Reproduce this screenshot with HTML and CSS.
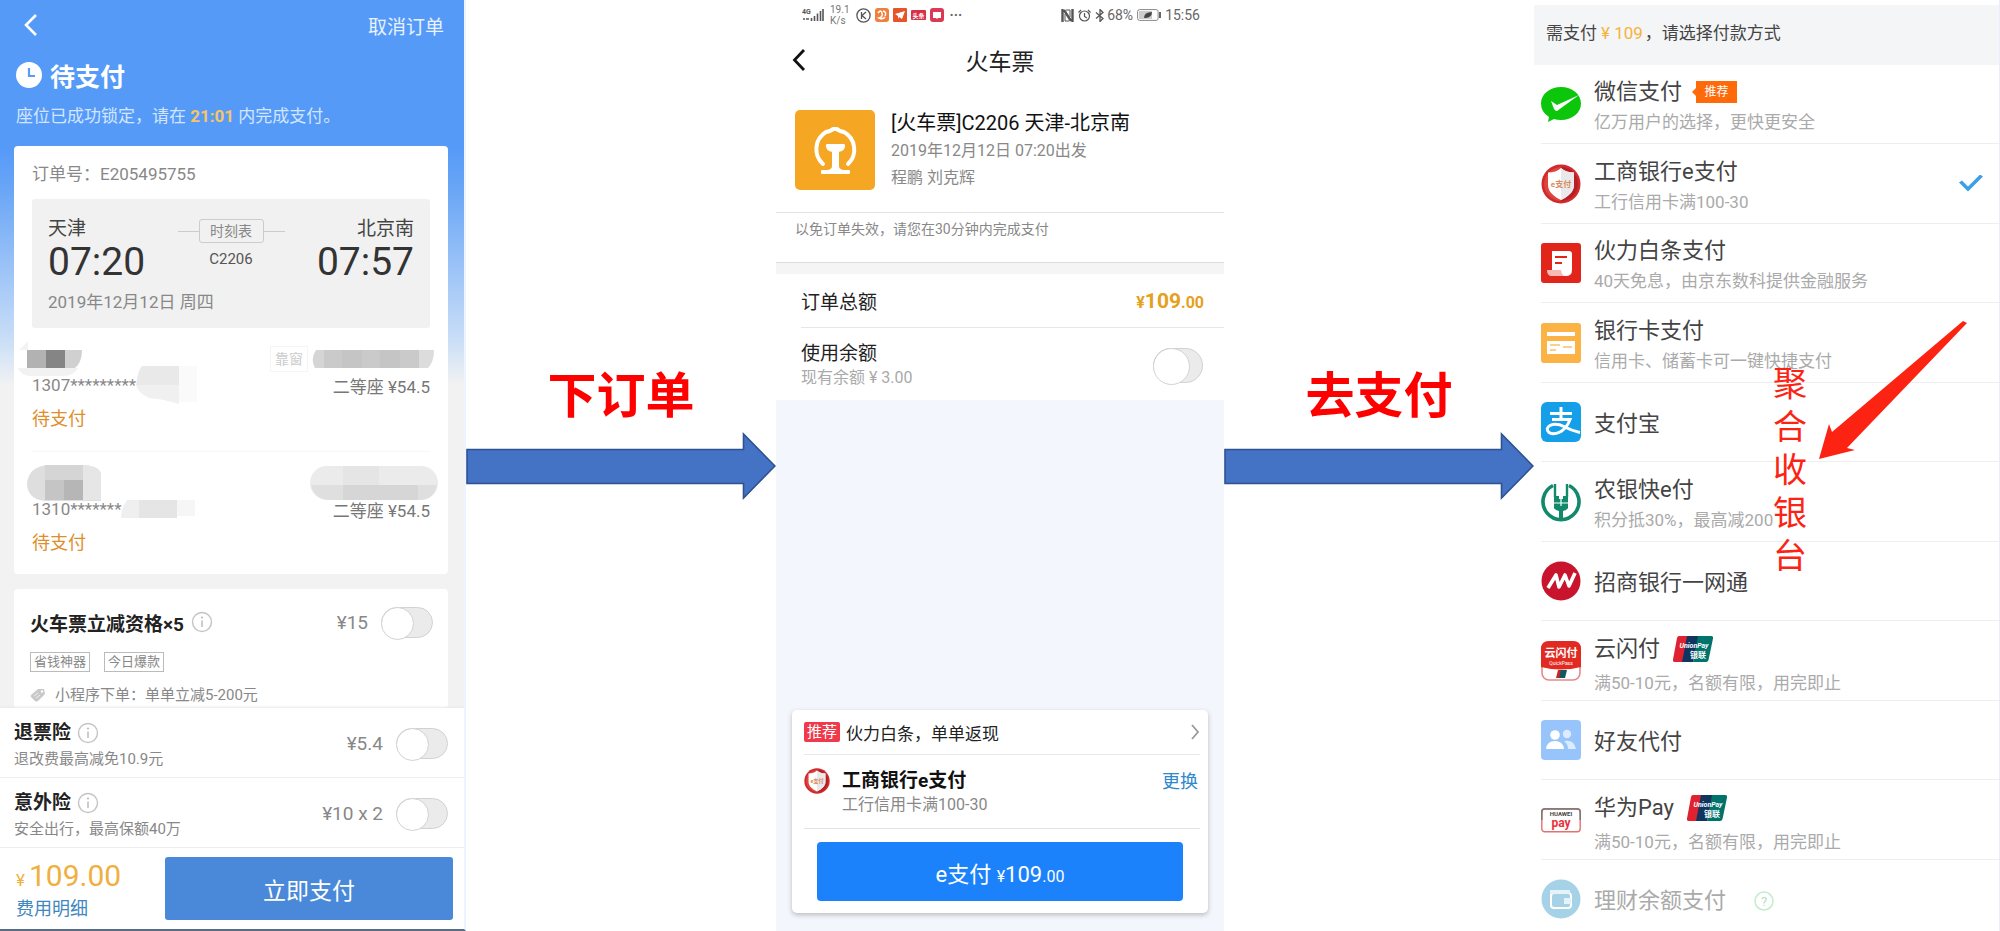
FILE: index.html
```html
<!DOCTYPE html>
<html lang="zh-CN">
<head>
<meta charset="utf-8">
<title>火车票支付流程</title>
<link rel="stylesheet" href="styles.css">
</head>
<body>
<svg class="defs" width="0" height="0" aria-hidden="true">
  <symbol id="info" viewBox="0 0 22 22">
    <circle cx="11" cy="11" r="9.5" fill="none" stroke="#c4c4c4" stroke-width="1.4"/>
    <circle cx="11" cy="6.5" r="1.1" fill="#bbb"/>
    <path d="M11 9.5v6.5" stroke="#bbb" stroke-width="1.5"/>
  </symbol>
  <symbol id="icbc" viewBox="0 0 40 40">
    <circle cx="20" cy="20" r="19.5" fill="#d02a2c"/>
    <circle cx="20" cy="20" r="17" fill="#b81f24"/>
    <path d="M3 20a17 17 0 0 1 17-17v34A17 17 0 0 1 3 20z" fill="#e0423c"/>
    <path d="M20 4c3 3 8 4.500 13 4.500V21c0 7-6 11.500-13 15C13 32.500 7 28 7 21V8.500C12 8.500 17 7 20 4z" fill="#fff"/>
    <path d="M20 4c3 3 8 4.500 13 4.500V21c0 7-6 11.500-13 15z" fill="#e9e9ec"/>
  </symbol>
  <symbol id="unionpay" viewBox="0 0 40 26">
    <path d="M6 0h10l-6 26H2q-2.500 0-2-2.500L4 2q.5-2 2-2z" fill="#e02230"/>
    <path d="M14 0h12l-6 26H9z" fill="#12355f"/>
    <path d="M25 0h13q2.500 0 2 2.500L35.500 24q-.5 2-2.500 2H20z" fill="#00736c"/>
  </symbol>
</svg>

<main class="flow">

  <section class="phone order">
    <header class="order-head">
      <div class="order-nav">
        <button class="icon-btn" aria-label="返回"><svg width="14" height="22" viewBox="0 0 14 22"><path d="M12 1L2 11l10 10" fill="none" stroke="#fff" stroke-width="2.600"/></svg></button>
        <button class="text-btn cancel">取消订单</button>
      </div>
      <h1 class="order-state">
        <svg width="26" height="26" viewBox="0 0 26 26"><circle cx="13" cy="13" r="13" fill="#fff"/><path d="M13 6v8h6" fill="none" stroke="#5a9bf5" stroke-width="2.200"/></svg>
        待支付
      </h1>
      <p class="order-tip">座位已成功锁定，请在 <b>21:01</b> 内完成支付。</p>
    </header>

    <article class="card ticket">
      <p class="order-no">订单号：E205495755</p>
      <div class="trip">
        <div class="stop"><span class="station">天津</span><span class="time">07:20</span></div>
        <div class="train">
          <div class="train-line"><button class="timetable">时刻表</button></div>
          <span>C2206</span>
        </div>
        <div class="stop end"><span class="station">北京南</span><span class="time">07:57</span></div>
        <p class="date">2019年12月12日 周四</p>
      </div>

      <div class="passenger">
        <div class="p-name">
          <svg class="mask-left" width="64" height="36" viewBox="0 0 64 36"><path d="M0 10L10 0v9H0z" fill="#f3f3f3"/><path d="M0 27h60q-5 8-14 8H12q-8 0-12-8z" fill="#f2f2f2"/><path d="M9 9h20v18H9z" fill="#b2b2b2"/><path d="M28 9h19v18H28z" fill="#858585"/><path d="M47 9h17q0 12-7 18H47z" fill="#d0d0d0"/></svg>
          <span class="seat-tag">靠窗</span>
          <svg class="mask-right" width="122" height="18" viewBox="0 0 122 18"><path d="M4 0h9v18H3q-5-9 1-18z" fill="#d5d5d5"/><path d="M12 0h95v18H12z" fill="#cacaca"/><path d="M30 0h20v18H30zM68 0h20v18H68z" fill="#c5c5c5"/><path d="M107 0h15q0 12-6 18h-9z" fill="#dcdcdc"/></svg>
        </div>
        <div class="p-id">
          <span>1307*********</span>
          <svg width="62" height="38" viewBox="0 0 62 38"><path d="M6 0h37v19H0Q2 4 6 0z" fill="#e9e9e9"/><path d="M0 19h43v19q-16-5-30-6Q2 27 0 19z" fill="#f0f0f0"/><path d="M43 0h18v36H43z" fill="#fafafa"/></svg>
          <span class="price">二等座 ¥54.5</span>
        </div>
        <p class="p-state">待支付</p>
      </div>
      <div class="passenger">
        <div class="p-name">
          <svg class="mask-low" width="74" height="36" viewBox="0 0 74 36"><path d="M20 0h38q16 2 16 10v26H18Q0 34 0 18 2 2 20 0z" fill="#dedede"/><path d="M18 0h38v15H18z" fill="#d5d5d5"/><path d="M18 15h19v20H18z" fill="#c5c5c5"/><path d="M37 15h19v20H37z" fill="#b6b6b6"/><path d="M56 0v35h18V10Q72 2 60 0z" fill="#e6e6e6"/></svg>
          <svg class="mask-wide" width="128" height="34" viewBox="0 0 128 34"><rect width="128" height="34" rx="17" fill="#ebebeb"/><path d="M1 19h126q-3 15-18 15H18Q4 32 1 19z" fill="#dfdfdf"/><path d="M33 0h36v19H33z" fill="#e5e5e5"/><path d="M33 19h75v15H33z" fill="#d6d6d6"/></svg>
        </div>
        <div class="p-id">
          <span>1310*******</span>
          <svg width="75" height="18" viewBox="0 0 75 18"><path d="M6 0h12v18H0Q0 8 6 0z" fill="#efefef"/><path d="M18 0h38v18H18z" fill="#e5e5e5"/><path d="M56 0h18v16H56z" fill="#f6f6f6"/></svg>
          <span class="price">二等座 ¥54.5</span>
        </div>
        <p class="p-state">待支付</p>
      </div>
    </article>

    <article class="card coupon">
      <div class="coupon-head">
        <h2>火车票立减资格×5</h2>
        <svg width="22" height="22"><use href="#info"/></svg>
        <span class="amount">¥15</span>
        <input class="switch" type="checkbox" aria-label="火车票立减资格">
      </div>
      <div class="tags"><span>省钱神器</span><span>今日爆款</span></div>
      <p class="promo">
        <svg width="16" height="14" viewBox="0 0 16 14"><path d="M8 1h6l1 5-7 7q-2 1-3 0L1 9q-1-1 0-2z" fill="#c9c9c9"/><circle cx="12" cy="3.500" r="1.200" fill="#fff"/><path d="M4 8l4-3M6 10l4-3" stroke="#eee"/></svg>
        小程序下单：单单立减5-200元
      </p>
    </article>

    <footer class="order-foot">
      <div class="option">
        <div class="option-text">
          <h2>退票险 <svg width="22" height="22"><use href="#info"/></svg></h2>
          <p>退改费最高减免10.9元</p>
        </div>
        <span class="amount">¥5.4</span>
        <input class="switch" type="checkbox" aria-label="退票险">
      </div>
      <div class="option">
        <div class="option-text">
          <h2>意外险 <svg width="22" height="22"><use href="#info"/></svg></h2>
          <p>安全出行，最高保额40万</p>
        </div>
        <span class="amount">¥10 x 2</span>
        <input class="switch" type="checkbox" aria-label="意外险">
      </div>
      <div class="pay-bar">
        <div class="total">
          <p class="sum"><small>¥</small>109.00</p>
          <a href="#">费用明细</a>
        </div>
        <button class="pay-now">立即支付</button>
      </div>
    </footer>
  </section>

  <div class="step">
    <p>下订单</p>
    <svg height="68" viewBox="0 0 310 68" preserveAspectRatio="none"><path d="M1 17.500H277.500V2L309 34 277.500 66V51.500H1z" fill="#4472c4" stroke="#2f528f" stroke-width="1.600"/></svg>
  </div>

  <section class="phone cashier">
    <div class="status">
      <svg width="22" height="14" viewBox="0 0 22 14"><text x="0" y="6" font-size="7" font-weight="700" fill="#555">4G</text><path d="M1 11h2M4 11h3M9.500 13v-3M12.500 13V8M15.500 13V5.500M18.500 13V3M21 13V1" stroke="#555" stroke-width="1.600"/></svg>
      <span class="speed">19.1<br>K/s</span>
      <svg width="15" height="15" viewBox="0 0 15 15"><circle cx="7.500" cy="7.500" r="6.600" fill="none" stroke="#555" stroke-width="1.300"/><path d="M5.500 4v7M10 4L6 7.500l4 3.500" fill="none" stroke="#555" stroke-width="1.300"/></svg>
      <svg width="14" height="14" viewBox="0 0 14 14"><rect width="14" height="14" rx="3" fill="#f0803c"/><path d="M3 5q3-4 4 0t-3 5q4 2 6-1M8 3q4 1 2 5" fill="none" stroke="#fff" stroke-width="1.500"/></svg>
      <svg width="14" height="14" viewBox="0 0 14 14"><rect width="14" height="14" rx="1" fill="#e8542a"/><path d="M2 6l10-3-3 8-3-2-1 2V8z" fill="#fff"/></svg>
      <svg width="15" height="10" viewBox="0 0 15 10"><rect width="15" height="10" rx="1" fill="#d63348"/><text x="7.500" y="7.500" font-size="6" font-weight="700" text-anchor="middle" fill="#fff">头条</text></svg>
      <svg width="14" height="14" viewBox="0 0 14 14"><rect width="14" height="14" rx="3" fill="#d93a55"/><path d="M3 4h8v6H8l-1 1-1-1H3z" fill="#fff"/></svg>
      <span class="dots">···</span>
      <span class="status-gap"></span>
      <svg width="13" height="13" viewBox="0 0 13 13"><path d="M1.500 0v13M11.500 0v13M3 1l7 11" stroke="#555" stroke-width="2.400"/><path d="M5 1h4v7M4 5v7h4" fill="none" stroke="#555"/></svg>
      <svg width="13" height="13" viewBox="0 0 13 13"><circle cx="6.500" cy="7" r="5" fill="none" stroke="#555" stroke-width="1.200"/><path d="M6.500 4v3.500L9 9M.5 3.500L3 1M12.500 3.500L10 1" fill="none" stroke="#555" stroke-width="1.200"/></svg>
      <span class="battery-text"><svg width="10" height="13" viewBox="0 0 10 13"><path d="M1 3.500l7 6L5 12.500V.5l3 3-7 6" fill="none" stroke="#555" stroke-width="1.300"/></svg>68%</span>
      <svg width="24" height="12" viewBox="0 0 24 12"><rect x=".6" y=".6" width="20.500" height="10.800" rx="2" fill="#fff" stroke="#888"/><path d="M2 2h13v8H2z" fill="#ccc"/><path d="M7 9q0-6 8-6 0 6-8 6z" fill="#444"/><path d="M23 3v6" stroke="#666" stroke-width="2"/></svg>
      <span>15:56</span>
    </div>
    <header class="cashier-nav">
      <button class="icon-btn" aria-label="返回"><svg width="14" height="22" viewBox="0 0 14 22"><path d="M12 1L2.500 11 12 21" fill="none" stroke="#111" stroke-width="2.800"/></svg></button>
      <h1>火车票</h1>
    </header>
    <div class="goods">
      <svg width="80" height="80" viewBox="0 0 80 80"><rect width="80" height="80" rx="5" fill="#f5a623"/><path d="M28 54A20 20 0 0 1 31 22Q36 21 38 19h4Q44 21 49 22A20 20 0 0 1 53 54" fill="none" stroke="#fff" stroke-width="4" stroke-linecap="round" stroke-linejoin="round"/><path d="M32 35h17q1 5-6 6v15q0 4 5 5h6v2H27v-2h6q5-1 5-5V41q-7-1-6-6z" fill="#fff" stroke="#fff" stroke-width="2" stroke-linejoin="round"/></svg>
      <div>
        <h2>[火车票]C2206 天津-北京南</h2>
        <p>2019年12月12日 07:20出发</p>
        <p>程鹏 刘克辉</p>
      </div>
    </div>
    <p class="notice">以免订单失效，请您在30分钟内完成支付</p>
    <div class="sums">
      <div class="sum-row"><span>订单总额</span><b class="gold"><small>¥</small>109<small>.00</small></b></div>
      <div class="balance">
        <label for="balance">使用余额<small>现有余额 ¥ 3.00</small></label>
        <input class="switch wide" id="balance" type="checkbox">
      </div>
    </div>
    <div class="paybox">
      <a class="recommend" href="#"><em>推荐</em><span>伙力白条，单单返现</span>
        <svg width="10" height="16" viewBox="0 0 10 16"><path d="M2 1l6 7-6 7" fill="none" stroke="#999" stroke-width="1.800"/></svg></a>
      <div class="chosen">
        <svg width="26" height="26" viewBox="0 0 40 40"><use href="#icbc" width="40" height="40"/><text x="20" y="23" font-size="8" font-weight="700" text-anchor="middle" fill="#d98a5c">e支付</text></svg>
        <div><h2>工商银行e支付</h2><p>工行信用卡满100-30</p></div>
        <a href="#">更换</a>
      </div>
      <button class="epay">e支付 <small>¥</small>109<small>.00</small></button>
    </div>
  </section>

  <div class="step">
    <p>去支付</p>
    <svg height="68" viewBox="0 0 310 68" preserveAspectRatio="none"><path d="M1 17.500H277.500V2L309 34 277.500 66V51.500H1z" fill="#4472c4" stroke="#2f528f" stroke-width="1.600"/></svg>
  </div>

  <section class="phone methods">
    <h1 class="methods-head">需支付<span>¥ 109</span>，请选择付款方式</h1>
    <form class="method-list">
      <label class="method">
        <svg width="40" height="40" viewBox="0 0 40 40"><path d="M20 3c11 0 20 7 20 16.500S31 36 20 36q-4 0-7-1l-6 3 1-5Q0 28 0 19.500C0 10 9 3 20 3z" fill="#0bc60b"/><path d="M10 17l6 4L38 11 16 27q-2 0-3-2z" fill="#fff"/></svg>
        <span class="m-text"><span class="m-name">微信支付<em class="flag">推荐</em></span><small>亿万用户的选择，更快更安全</small></span>
        <input type="radio" name="method">
      </label>
      <label class="method">
        <svg width="40" height="40" viewBox="0 0 40 40"><use href="#icbc" width="40" height="40"/><text x="20" y="23" font-size="8" font-weight="700" text-anchor="middle" fill="#d98a5c">e支付</text></svg>
        <span class="m-text"><span class="m-name">工商银行e支付</span><small>工行信用卡满100-30</small></span>
        <input type="radio" name="method" checked>
      </label>
      <label class="method">
        <svg width="40" height="40" viewBox="0 0 40 40"><rect width="40" height="40" rx="3" fill="#e1251b"/><path d="M11 8h17q3 0 3 3v16q0 6-6 6H12q-5 0-5-5h4z" fill="#fff"/><path d="M6 27h14q1 6 4 6H11q-5 0-5-6z" fill="#f7b9b5"/><path d="M14 14h12M14 20h7" stroke="#e1251b" stroke-width="2"/></svg>
        <span class="m-text"><span class="m-name">伙力白条支付</span><small>40天免息，由京东数科提供金融服务</small></span>
        <input type="radio" name="method">
      </label>
      <label class="method">
        <svg width="40" height="40" viewBox="0 0 40 40"><rect width="40" height="40" rx="3" fill="#fab344"/><path d="M6 9h28v4H6zM6 18h28v13H6z" fill="#fff"/><path d="M9 22h10M9 27h6M22 24h9" stroke="#fbd08a" stroke-width="2"/></svg>
        <span class="m-text"><span class="m-name">银行卡支付</span><small>信用卡、储蓄卡可一键快捷支付</small></span>
        <input type="radio" name="method">
      </label>
      <label class="method">
        <svg width="40" height="40" viewBox="0 0 40 40"><rect width="40" height="40" rx="6" fill="#159fe8"/><path d="M9 11.500h22M20 5v12M11 17.500h18q-3 8-9 12-7 4-12 1-4-4 1-7 6-3 14 1 7 4 16 6" fill="none" stroke="#fff" stroke-width="3"/></svg>
        <span class="m-text"><span class="m-name">支付宝</span></span>
        <input type="radio" name="method">
      </label>
      <label class="method">
        <svg width="40" height="40" viewBox="0 0 40 40"><path d="M12 3.500a18 18 0 1 0 16 0" fill="none" stroke="#12896a" stroke-width="3.600"/><path d="M14 2v13M26 2v13" stroke="#12896a" stroke-width="2.400"/><path d="M13 14h5v3h4v-3h5v12q-2 3-5 3v9h-4v-9q-3 0-5-3z" fill="#12896a"/><path d="M13 21h14M20 14v10" stroke="#fff" stroke-width="1.200"/></svg>
        <span class="m-text"><span class="m-name">农银快e付</span><small>积分抵30%，最高减200</small></span>
        <input type="radio" name="method">
      </label>
      <label class="method">
        <svg width="40" height="40" viewBox="0 0 40 40"><circle cx="20" cy="20" r="19.500" fill="#c8152d"/><path d="M7 27l8-13 3 12 6-12 4 11 6-13" fill="none" stroke="#fff" stroke-width="3.600" stroke-linejoin="round"/></svg>
        <span class="m-text"><span class="m-name">招商银行一网通</span></span>
        <input type="radio" name="method">
      </label>
      <label class="method">
        <svg width="40" height="40" viewBox="0 0 40 40"><rect x="1" y="1" width="38" height="38" rx="7" fill="#fff" stroke="#e58a8a" stroke-width="1.600"/><path d="M0 8q0-8 8-8h24q8 0 8 8v18q-20 5-40 0z" fill="#e02a22"/><text x="20" y="16" font-size="11" font-weight="700" text-anchor="middle" fill="#fff">云闪付</text><text x="20" y="24" font-size="5" text-anchor="middle" fill="#fff">QuickPass</text><path d="M17 29h5l-2 8h-5z" fill="#c22"/><path d="M20 29h6l-2 8h-6z" fill="#0d5a62"/></svg>
        <span class="m-text roomy"><span class="m-name">云闪付<svg width="40" height="26" viewBox="0 0 40 26"><use href="#unionpay" width="40" height="26"/><text x="21" y="12" font-size="7" font-style="italic" font-weight="700" text-anchor="middle" fill="#fff">UnionPay</text><text x="25" y="22" font-size="8" font-weight="700" text-anchor="middle" fill="#fff">银联</text></svg></span><small>满50-10元，名额有限，用完即止</small></span>
        <input type="radio" name="method">
      </label>
      <label class="method">
        <svg width="40" height="40" viewBox="0 0 40 40"><rect width="40" height="40" rx="4" fill="#97c5fb"/><circle cx="14" cy="15" r="4.800" fill="#fff"/><circle cx="26" cy="14" r="4.200" fill="#dcebff"/><path d="M5 29q1-8 9-8t9 8z" fill="#fff"/><path d="M23 21q10-2 12 8h-8q0-5-4-8z" fill="#dcebff"/></svg>
        <span class="m-text"><span class="m-name">好友代付</span></span>
        <input type="radio" name="method">
      </label>
      <label class="method">
        <svg width="40" height="40" viewBox="0 0 40 40"><rect x=".8" y="8.800" width="38.400" height="23" rx="3" fill="#fff" stroke="#e57070" stroke-width="1.400"/><path d="M.8 20v-8q0-3 3-3h32.400q3 0 3 3v8" fill="none" stroke="#777" stroke-width="1.400"/><text x="20" y="16" font-size="6" font-weight="700" text-anchor="middle" fill="#444">HUAWEI</text><text x="20" y="27" font-size="12" font-weight="700" text-anchor="middle" fill="#e8333c">pay</text></svg>
        <span class="m-text roomy"><span class="m-name">华为Pay<svg width="40" height="26" viewBox="0 0 40 26"><use href="#unionpay" width="40" height="26"/><text x="21" y="12" font-size="7" font-style="italic" font-weight="700" text-anchor="middle" fill="#fff">UnionPay</text><text x="25" y="22" font-size="8" font-weight="700" text-anchor="middle" fill="#fff">银联</text></svg></span><small>满50-10元，名额有限，用完即止</small></span>
        <input type="radio" name="method">
      </label>
      <label class="method off">
        <svg width="40" height="40" viewBox="0 0 40 40"><circle cx="20" cy="20" r="19.500" fill="#a6d2e8"/><path d="M10 17q0-3 3-3h14q3 0 3 3v9q0 3-3 3H13q-3 0-3-3z" fill="none" stroke="#fff" stroke-width="2"/><path d="M9 11h20v4H9zM23 19h7v6h-7z" fill="#e4f2f9"/></svg>
        <span class="m-text"><span class="m-name">理财余额支付<svg class="help" width="20" height="20" viewBox="0 0 20 20"><circle cx="10" cy="10" r="9" fill="none" stroke="#c3ecc9" stroke-width="1.500"/><text x="10" y="14.500" font-size="13" text-anchor="middle" fill="#b5dfc0">?</text></svg></span></span>
        <input type="radio" name="method" disabled>
      </label>
    </form>
    <p class="callout">聚合收银台</p>
    <svg class="pointer" width="150" height="140" viewBox="0 0 150 140"><path d="M0 138L10 103l3 8L144 0l4 2L28 127l8 2z" fill="#fd2312"/></svg>
  </section>
</main>
</body>
</html>
```
FILE: styles.css
```css
* { box-sizing: border-box; }
body {
  margin: 0;
  background: #fff;
  color: #222;
  font-family: Roboto, "Noto Sans CJK SC", sans-serif;
  font-size: 16px;
}
h1, h2, p { margin: 0; font-weight: 400; }
em { font-style: normal; }
svg { display: block; flex: none; }
a { color: inherit; text-decoration: none; }
button { border: 0; padding: 0; background: none; font: inherit; color: inherit; }
input { margin: 0; flex: none; }
.defs { position: absolute; }

.flow {
  display: grid;
  grid-template-columns: 466fr 310fr 448fr 310fr 466fr;
  height: 100vh;
  overflow: hidden;
}
.phone { display: flex; flex-direction: column; min-width: 0; overflow: hidden; }

.switch {
  appearance: none;
  width: 52px;
  height: 31px;
  border: 1px solid #d2d2d2;
  border-radius: 16px;
  background: #ebebeb;
}
.switch::before {
  content: "";
  display: block;
  width: 31px;
  height: 31px;
  margin: -1px;
  border: 1px solid #d2d2d2;
  border-radius: 50%;
  background: #fff;
}
.switch.wide { width: 50px; height: 35px; border-radius: 18px; }
.switch.wide::before { width: 35px; height: 35px; }

/* Order page */
.order {
  border-right: 2px solid #eef3ff;
  border-bottom: 2px solid #5b6b85;
  background: linear-gradient(#569af8 150px, #6aa6f6 190px, #c9def7 340px, #f2f2f2 385px);
}
.order-head { color: #fff; padding-bottom: 14px; }
.order-nav {
  display: flex;
  align-items: center;
  justify-content: space-between;
  height: 50px;
  padding: 0 20px 0 24px;
}
.cancel { font-size: 19px; color: #e8f2ff; }
.order-state {
  display: flex;
  align-items: center;
  gap: 8px;
  height: 50px;
  padding-left: 16px;
  font-size: 25px;
  font-weight: 700;
}
.order-tip { padding-left: 16px; font-size: 17px; line-height: 32px; color: #d3e6ff; }
.order-tip b { color: #f7c566; }
.card { margin: 0 16px 0 14px; border-radius: 4px; background: #fff; }
.ticket { padding: 13px 18px 0; margin-bottom: 15px; }
.order-no { margin-bottom: 10px; font-size: 17px; line-height: 30px; color: #888; }
.trip {
  display: grid;
  grid-template-columns: 1fr auto 1fr;
  padding: 17px 16px 14px;
  border-radius: 3px;
  background: #f1f1f1;
}
.stop { display: flex; flex-direction: column; }
.stop.end { text-align: right; }
.station { font-size: 19px; line-height: 26px; color: #444; }
.time { font-size: 39px; line-height: 40px; color: #333; }
.train { padding-top: 3px; text-align: center; font-size: 15px; line-height: 20px; color: #555; }
.train-line { display: flex; align-items: center; margin-bottom: 6px; }
.train-line::before, .train-line::after { content: ""; width: 21px; height: 1px; background: #ccc; }
.timetable {
  width: 65px;
  height: 24px;
  border: 1px solid #ccc;
  border-radius: 3px;
  font-size: 14px;
  color: #888;
}
.date { grid-column: 1 / -1; margin-top: 8px; font-size: 17px; line-height: 24px; color: #888; }
.passenger { padding: 18px 0 11px; border-bottom: 1px solid #f7f7f7; }
.passenger:last-child { padding-bottom: 10px; border: 0; }
.p-name { display: flex; align-items: center; height: 26px; }
.mask-left { margin-left: -14px; }
.mask-low { margin-left: -5px; }
.mask-right { margin: 0 -4px 0 4px; }
.mask-wide { margin: 0 -8px 0 auto; }
.seat-tag {
  margin-left: auto;
  padding: 0 4px;
  border: 1px solid #f5f5f5;
  font-size: 14px;
  line-height: 24px;
  color: #ccc;
}
.p-id { display: flex; align-items: center; height: 26px; font-size: 17px; color: #888; }
.price { margin-left: auto; color: #777; }
.p-state { font-size: 18px; line-height: 42px; color: #e08e2b; }

.coupon { flex: 1; padding: 13px 15px 0 16px; }
.coupon-head { display: flex; align-items: center; height: 40px; }
.coupon-head h2 { margin-right: 7px; font-size: 19px; font-weight: 700; }
.amount { margin: 0 13px 0 auto; font-size: 19px; color: #888; }
.tags { display: flex; gap: 14px; margin: 10px 0 11px; }
.tags span { padding: 0 3px; border: 1px solid #bbb; font-size: 13px; line-height: 18px; color: #888; }
.promo { display: flex; align-items: center; gap: 9px; font-size: 15px; line-height: 24px; color: #888; }

.order-foot { background: #fff; box-shadow: 0 -1px 2px #e8e8e8; }
.option {
  display: flex;
  align-items: center;
  padding: 7px 16px 5px 14px;
  border-bottom: 1px solid #eee;
}
.option h2 { display: flex; align-items: center; gap: 6px; font-size: 19px; font-weight: 700; line-height: 26px; }
.option p { font-size: 15px; line-height: 26px; color: #888; }
.option-text { flex: 1; padding-top: 5px; }
.pay-bar { display: flex; padding: 9px 11px 9px 16px; }
.total { flex: 1; color: #3f87c0; font-size: 18px; line-height: 20px; }
.sum { font-size: 30px; line-height: 38px; color: #f0b040; }
.sum small { margin-right: 4px; font-size: 17px; }
.pay-now { flex: 0 0 288px; height: 63px; border-radius: 3px; background: #4a89d9; color: #fff; font-size: 23px; }

/* Step between two pages */
.step { padding-top: 368px; text-align: center; }
.step p { margin-bottom: 6px; font-size: 49px; font-weight: 700; line-height: 58px; color: #f00; }
.step svg { width: 100%; }

/* Cashier page */
.cashier { background: #f3f6fd; }
.status {
  display: flex;
  align-items: center;
  gap: 4px;
  height: 30px;
  padding: 0 24px 0 26px;
  background: #fff;
  font-size: 14px;
  color: #666;
}
.speed { margin: 0 2px; font-size: 10px; line-height: 11px; color: #777; }
.dots { margin-left: 2px; font-weight: 700; }
.status-gap { flex: 1; }
.battery-text { display: flex; align-items: center; gap: 2px; }
.cashier-nav {
  display: grid;
  grid-template-columns: 1fr auto 1fr;
  align-items: center;
  height: 60px;
  padding: 0 16px;
  background: #fff;
}
.cashier-nav .icon-btn { justify-self: start; }
.cashier-nav h1 { font-size: 23px; }
.goods {
  display: flex;
  gap: 16px;
  padding: 20px 19px 21px;
  border-bottom: 1px solid #e3e3e3;
  background: #fff;
}
.goods h2 { font-size: 20px; line-height: 27px; color: #111; }
.goods p { font-size: 16px; line-height: 27px; color: #888; }
.notice { padding: 0 19px 18px; background: #fff; font-size: 14px; line-height: 32px; color: #888; }
.sums { border-top: 11px solid #f5f5f5; padding-left: 25px; background: #fff; box-shadow: 0 -1px 0 #ddd; }
.sum-row {
  display: flex;
  align-items: center;
  justify-content: space-between;
  height: 54px;
  padding-right: 20px;
  border-bottom: 1px solid #e6e6e6;
  font-size: 19px;
}
.gold { font-size: 21px; color: #e5a01c; }
.gold small { font-size: 16px; }
.balance { display: flex; align-items: center; padding: 13px 21px 11px 0; font-size: 19px; line-height: 26px; }
.balance label { flex: 1; }
.balance small { display: block; font-size: 16px; line-height: 22px; color: #aaa; }
.paybox {
  margin: auto 16px 18px;
  padding: 0 8px 12px 12px;
  border-radius: 5px;
  background: #fff;
  box-shadow: 0 2px 5px #bbb;
}
.recommend { display: flex; align-items: center; gap: 6px; height: 45px; border-bottom: 1px solid #e8e8e8; font-size: 17px; }
.recommend span { flex: 1; }
.recommend em { padding: 0 3px; border-radius: 2px; background: #f0394a; color: #fff; font-size: 15px; line-height: 20px; }
.chosen { display: flex; gap: 12px; padding: 13px 2px 12px 0; border-bottom: 1px solid #e3e3e3; }
.chosen div { flex: 1; }
.chosen h2 { font-size: 19px; font-weight: 700; line-height: 26px; color: #111; }
.chosen p { font-size: 16px; line-height: 22px; color: #888; }
.chosen a { font-size: 18px; line-height: 28px; color: #2e88cc; }
.epay {
  display: block;
  width: calc(100% - 30px);
  height: 59px;
  margin: 13px 17px 0 13px;
  border-radius: 4px;
  background: #1b82fb;
  color: #fff;
  font-size: 22px;
}
.epay small { font-size: 16px; }

/* Payment methods page */
.methods { position: relative; padding-top: 5px; border-right: 1px solid #ececfa; }
.methods-head { flex: none; height: 60px; padding-left: 12px; background: #f4f5f7; font-size: 17px; line-height: 56px; color: #444; }
.methods-head span { margin: 0 2px 0 4px; color: #f7b23b; }
.method-list { padding-left: 7px; }
.method {
  display: flex;
  align-items: center;
  gap: 13px;
  height: 79px;
  padding-right: 16px;
  border-bottom: 1px solid #eee;
  color: #444;
}
.method:nth-child(even) { height: 80px; }
.m-text { flex: 1; padding-top: 4px; }
.m-name { display: flex; align-items: center; font-size: 22px; line-height: 32px; }
.m-name svg { margin-left: 13px; }
.m-name .help { margin-left: 28px; }
.m-text small { display: block; font-size: 17px; line-height: 28px; color: #aaa; }
.m-text.roomy { padding-top: 9px; }
.m-text.roomy small { padding-top: 4px; }
.method.off { color: #aaa; }
.flag {
  position: relative;
  width: 41px;
  margin-left: 14px;
  background: #ff6a0a;
  color: #fff;
  font-size: 12px;
  line-height: 22px;
  text-align: center;
}
.flag::before {
  content: "";
  position: absolute;
  left: -4px;
  top: 7px;
  border: solid transparent;
  border-width: 4px 4px 4px 0;
  border-right-color: #ff6a0a;
}
.method input { appearance: none; width: 24px; height: 18px; }
.method input:checked {
  background: #3d9fe6;
  clip-path: polygon(0 8px, 3px 6px, 9px 12px, 21px 0, 24px 2px, 9px 17px);
}
.callout {
  position: absolute;
  left: 239px;
  top: 363px;
  width: 34px;
  font-size: 34px;
  line-height: 43px;
  color: #fb2414;
}
.pointer { position: absolute; left: 285px; top: 321px; }
```
